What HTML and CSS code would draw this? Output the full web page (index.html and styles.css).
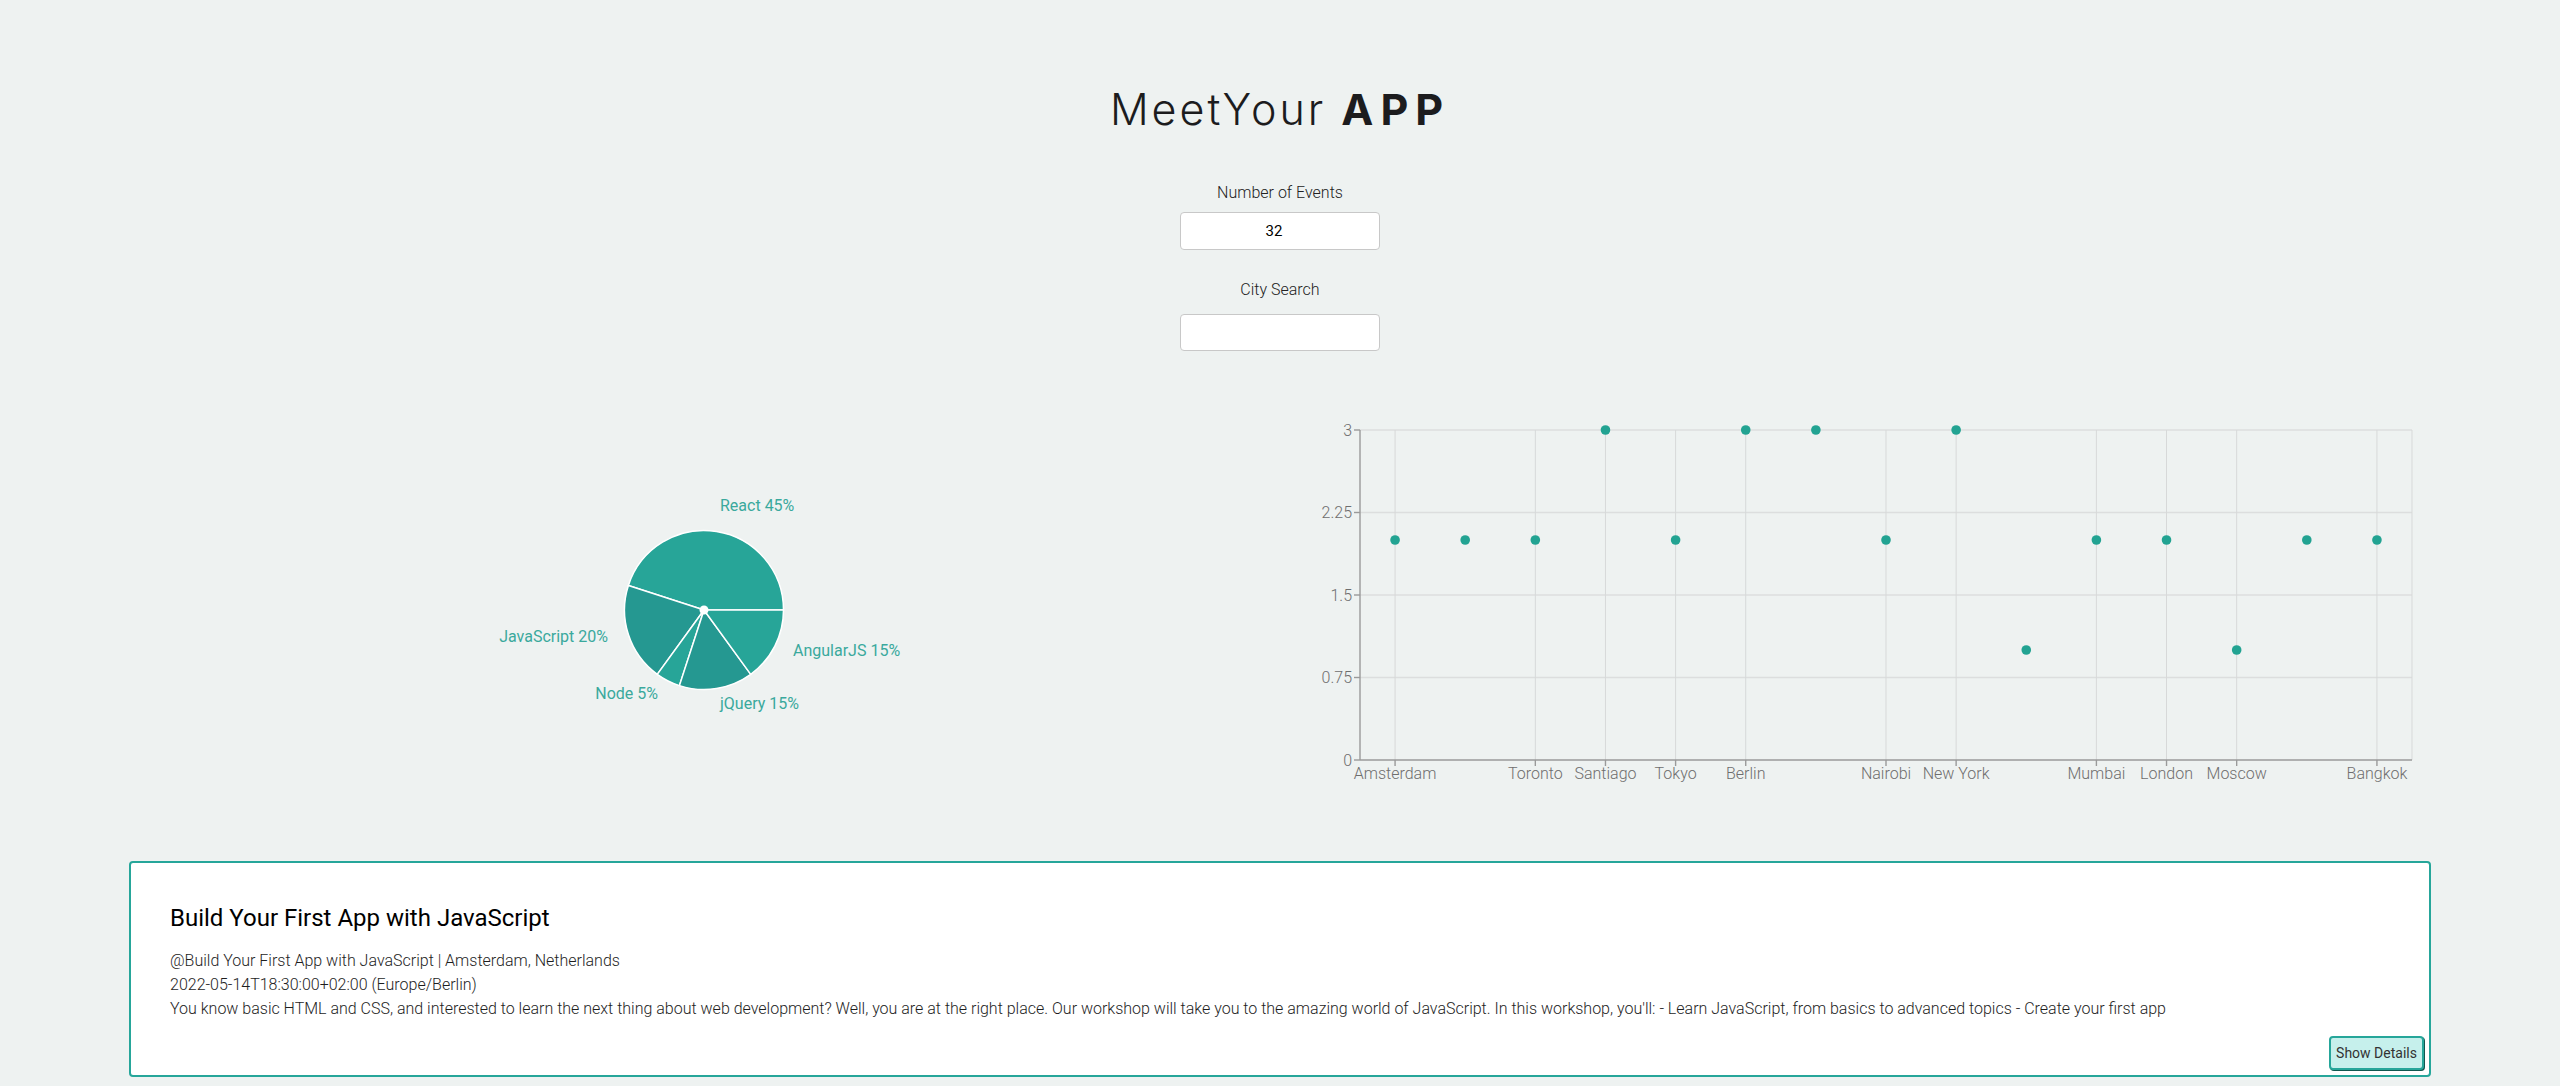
FILE: index.html
```html
<!DOCTYPE html>
<html lang="en">
<head>
<meta charset="utf-8">
<title>MeetYour APP</title>
<link rel="stylesheet" href="styles.css">
</head>
<body>
<div class="app">
  <h1 class="brand">MeetYour <span class="brand-bold">APP</span></h1>

  <div class="field field-number">
    <label class="field-label" for="num">Number of Events</label>
    <input class="field-input field-input-number" id="num" type="text" value="32">
  </div>

  <div class="field field-city">
    <label class="field-label" for="city">City Search</label>
    <input class="field-input" id="city" type="text" value="">
  </div>

  <div class="charts">
    <div class="chart-cell">
      <svg class="chart-svg" width="1151" height="400" viewBox="0 0 1151 400">
        <g stroke="#ffffff" stroke-width="1.5">
          <path class="slice-a" d="M575,200 L654.5,200 A79.5,79.5 0 0 0 499.39,175.43 Z"/>
          <path class="slice-b" d="M575,200 L499.39,175.43 A79.5,79.5 0 0 0 528.27,264.32 Z"/>
          <path class="slice-a" d="M575,200 L528.27,264.32 A79.5,79.5 0 0 0 550.43,275.61 Z"/>
          <path class="slice-b" d="M575,200 L550.43,275.61 A79.5,79.5 0 0 0 621.73,264.32 Z"/>
          <path class="slice-a" d="M575,200 L621.73,264.32 A79.5,79.5 0 0 0 654.5,200 Z"/>
        </g>
        <circle cx="575" cy="200" r="4.5" fill="#ffffff"/>
        <g class="pie-label">
          <text x="591" y="95" text-anchor="start" dominant-baseline="central">React 45%</text>
          <text x="479" y="226" text-anchor="end" dominant-baseline="central">JavaScript 20%</text>
          <text x="529" y="283" text-anchor="end" dominant-baseline="central">Node 5%</text>
          <text x="591" y="293" text-anchor="start" dominant-baseline="central">jQuery 15%</text>
          <text x="664" y="240" text-anchor="start" dominant-baseline="central">AngularJS 15%</text>
        </g>
      </svg>
    </div>
    <div class="chart-cell">
      <svg class="chart-svg" width="1151" height="400" viewBox="0 0 1151 400">
        <g class="grid-h">
          <line x1="80" y1="20" x2="1132" y2="20"/>
          <line x1="80" y1="102.5" x2="1132" y2="102.5"/>
          <line x1="80" y1="185" x2="1132" y2="185"/>
          <line x1="80" y1="267.5" x2="1132" y2="267.5"/>
        </g>
        <g class="grid-v">
          <line x1="115.07" y1="20" x2="115.07" y2="350"/>
          <line x1="255.33" y1="20" x2="255.33" y2="350"/>
          <line x1="325.47" y1="20" x2="325.47" y2="350"/>
          <line x1="395.6" y1="20" x2="395.6" y2="350"/>
          <line x1="465.73" y1="20" x2="465.73" y2="350"/>
          <line x1="606" y1="20" x2="606" y2="350"/>
          <line x1="676.13" y1="20" x2="676.13" y2="350"/>
          <line x1="816.4" y1="20" x2="816.4" y2="350"/>
          <line x1="886.53" y1="20" x2="886.53" y2="350"/>
          <line x1="956.67" y1="20" x2="956.67" y2="350"/>
          <line x1="1096.93" y1="20" x2="1096.93" y2="350"/>
          <line x1="1132" y1="20" x2="1132" y2="350"/>
        </g>
        <g class="axis">
          <line x1="80" y1="20" x2="80" y2="350"/>
          <line x1="80" y1="350" x2="1132" y2="350"/>
          <line x1="74" y1="20" x2="80" y2="20"/>
          <line x1="74" y1="102.5" x2="80" y2="102.5"/>
          <line x1="74" y1="185" x2="80" y2="185"/>
          <line x1="74" y1="267.5" x2="80" y2="267.5"/>
          <line x1="74" y1="350" x2="80" y2="350"/>
          <line x1="115.07" y1="350" x2="115.07" y2="356"/>
          <line x1="255.33" y1="350" x2="255.33" y2="356"/>
          <line x1="325.47" y1="350" x2="325.47" y2="356"/>
          <line x1="395.6" y1="350" x2="395.6" y2="356"/>
          <line x1="465.73" y1="350" x2="465.73" y2="356"/>
          <line x1="606" y1="350" x2="606" y2="356"/>
          <line x1="676.13" y1="350" x2="676.13" y2="356"/>
          <line x1="816.4" y1="350" x2="816.4" y2="356"/>
          <line x1="886.53" y1="350" x2="886.53" y2="356"/>
          <line x1="956.67" y1="350" x2="956.67" y2="356"/>
          <line x1="1096.93" y1="350" x2="1096.93" y2="356"/>
        </g>
        <g class="tick-label" text-anchor="end">
          <text x="72" y="25.5">3</text>
          <text x="72" y="108">2.25</text>
          <text x="72" y="190.5">1.5</text>
          <text x="72" y="273">0.75</text>
          <text x="72" y="355.5">0</text>
        </g>
        <g class="tick-label" text-anchor="middle">
          <text x="115.07" y="369">Amsterdam</text>
          <text x="255.33" y="369">Toronto</text>
          <text x="325.47" y="369">Santiago</text>
          <text x="395.6" y="369">Tokyo</text>
          <text x="465.73" y="369">Berlin</text>
          <text x="606" y="369">Nairobi</text>
          <text x="676.13" y="369">New York</text>
          <text x="816.4" y="369">Mumbai</text>
          <text x="886.53" y="369">London</text>
          <text x="956.67" y="369">Moscow</text>
          <text x="1096.93" y="369">Bangkok</text>
        </g>
        <g class="dots">
          <circle cx="115.07" cy="130" r="4.8"/>
          <circle cx="185.2" cy="130" r="4.8"/>
          <circle cx="255.33" cy="130" r="4.8"/>
          <circle cx="325.47" cy="20" r="4.8"/>
          <circle cx="395.6" cy="130" r="4.8"/>
          <circle cx="465.73" cy="20" r="4.8"/>
          <circle cx="535.87" cy="20" r="4.8"/>
          <circle cx="606" cy="130" r="4.8"/>
          <circle cx="676.13" cy="20" r="4.8"/>
          <circle cx="746.27" cy="240" r="4.8"/>
          <circle cx="816.4" cy="130" r="4.8"/>
          <circle cx="886.53" cy="130" r="4.8"/>
          <circle cx="956.67" cy="240" r="4.8"/>
          <circle cx="1026.8" cy="130" r="4.8"/>
          <circle cx="1096.93" cy="130" r="4.8"/>
        </g>
      </svg>
    </div>
  </div>

  <div class="event-card">
    <h2 class="event-title">Build Your First App with JavaScript</h2>
    <p class="event-line">@Build Your First App with JavaScript | Amsterdam, Netherlands</p>
    <p class="event-line">2022-05-14T18:30:00+02:00 (Europe/Berlin)</p>
    <p class="event-line">You know basic HTML and CSS, and interested to learn the next thing about web development? Well, you are at the right place. Our workshop will take you to the amazing world of JavaScript. In this workshop, you'll: - Learn JavaScript, from basics to advanced topics - Create your first app</p>
    <div class="event-actions">
      <button class="details-btn" type="button">Show Details</button>
    </div>
  </div>
</div>
</body>
</html>
```

FILE: styles.css
```css
html, body {
  margin: 0;
  padding: 0;
}

body {
  background: #eef2f1;
  font-family: Roboto, "Liberation Sans", Arial, sans-serif;
  color: #222;
  width: 2560px;
  height: 1086px;
  overflow: hidden;
}

.app {
  display: flex;
  flex-direction: column;
  align-items: center;
  padding-top: 83px;
}

.brand {
  margin: 0;
  font-family: Inter, "Noto Sans", sans-serif;
  font-size: 43px;
  line-height: 52px;
  font-weight: 300;
  letter-spacing: 3px;
  color: #1c1c1e;
}

.brand-bold {
  font-weight: 700;
  letter-spacing: 7px;
}

.field {
  display: flex;
  flex-direction: column;
  align-items: center;
}

.field-number {
  margin-top: 46px;
}

.field-city {
  margin-top: 28px;
}

.field-label {
  font-size: 16px;
  line-height: 24px;
  font-weight: 300;
  color: #222;
}

.field-input {
  box-sizing: border-box;
  width: 200px;
  height: 38px;
  margin-top: 7px;
  border: 1px solid #c8c8c8;
  border-radius: 4px;
  background: #fff;
  font-family: Roboto, "Liberation Sans", sans-serif;
  font-size: 15px;
  color: #000;
  text-align: center;
  padding: 0 12px 0 0;
  outline: none;
}

.field-city .field-input {
  margin-top: 12px;
  height: 37px;
}

.charts {
  display: grid;
  grid-template-columns: 1151px 1151px;
  margin-top: 59px;
  height: 400px;
}

.chart-cell {
  height: 400px;
}

.chart-svg {
  display: block;
}

.slice-a {
  fill: #27a598;
}

.slice-b {
  fill: #259891;
}

.pie-label text {
  fill: #3aa99d;
  font-family: Roboto, sans-serif;
  font-size: 16px;
}

.grid-v line {
  stroke: #d7d9d9;
  stroke-width: 1;
}

.grid-h line {
  stroke: #dcdede;
  stroke-width: 1.3;
}

.axis line {
  stroke: #9a9a9a;
  stroke-width: 1.4;
}

.tick-label text {
  fill: #6e6e6e;
  font-family: Roboto, sans-serif;
  font-size: 16px;
  font-weight: 300;
}

.dots circle {
  fill: #22a392;
}

.event-card {
  box-sizing: border-box;
  width: 2302px;
  margin-top: 51px;
  background: #fff;
  border: 2px solid #26a69a;
  border-radius: 4px;
  padding: 41px 5px 5px 39px;
  display: flex;
  flex-direction: column;
}

.event-title {
  margin: 0 0 16px 0;
  font-size: 24px;
  line-height: 29px;
  font-weight: 400;
  color: #000;
}

.event-line {
  margin: 0;
  font-size: 16px;
  line-height: 24px;
  font-weight: 300;
  color: #1e1e1e;
}

.event-actions {
  display: flex;
  justify-content: flex-end;
  margin-top: 15px;
}

.details-btn {
  box-sizing: border-box;
  width: 95px;
  height: 34px;
  background: #c6f0ec;
  border: 2px solid #26a69a;
  border-radius: 4px;
  box-shadow: 1px 1px 0 #11574f;
  font-family: Roboto, sans-serif;
  font-size: 14px;
  color: #333;
  padding: 0;
  cursor: pointer;
}
```
